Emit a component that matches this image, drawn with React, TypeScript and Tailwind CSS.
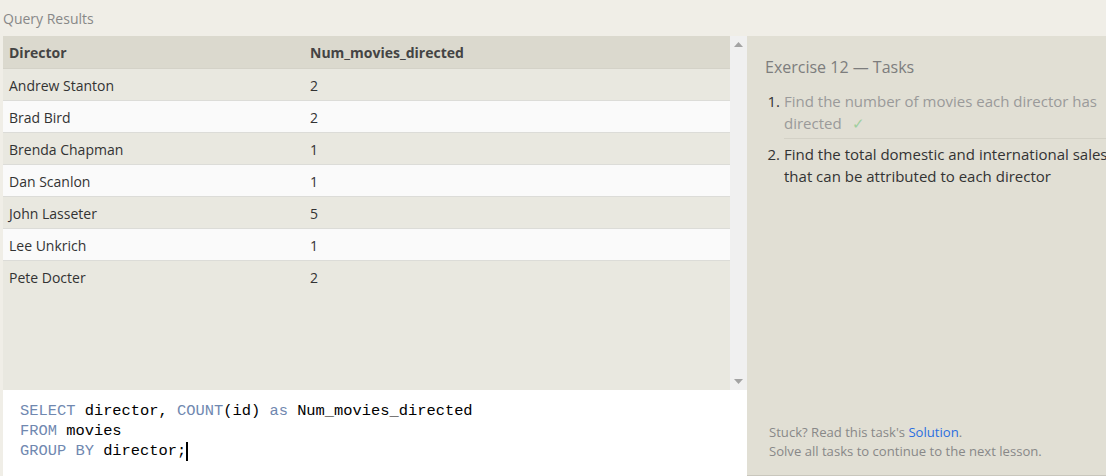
import React from 'react';

const rows: [string, number][] = [
  ['Andrew Stanton', 2],
  ['Brad Bird', 2],
  ['Brenda Chapman', 1],
  ['Dan Scanlon', 1],
  ['John Lasseter', 5],
  ['Lee Unkrich', 1],
  ['Pete Docter', 2],
];

const App: React.FC = () => {
  return (
    <div className="w-[1106px] h-[476px] overflow-hidden flex flex-col bg-[#f0eee7] font-['Open_Sans',sans-serif] text-[#333]">
      {/* header */}
      <div className="h-9 shrink-0 pl-[3px] flex items-center text-[14px] text-[#888]">Query Results</div>

      <div className="flex flex-1 min-h-0">
        {/* left: results + editor */}
        <div className="ml-[3px] w-[744px] flex flex-col">
          <div className="flex h-[354px]">
            <div className="flex-1 bg-[#e9e8e0] text-[14px]">
              <div className="flex h-[33px] items-center bg-[#dbd9ce] font-bold text-[#444] border-b border-[#d4d2c8]">
                <div className="w-[307px] pl-[6px]">Director</div>
                <div>Num_movies_directed</div>
              </div>
              {rows.map(([name, n], i) => (
                <div
                  key={name}
                  className={`flex h-8 items-center pt-[1px] border-b border-[#dcdcd8] ${i % 2 === 1 ? 'bg-[#fafafa]' : 'bg-[#e9e8e0]'} ${i === rows.length - 1 ? 'border-b-0' : ''}`}
                >
                  <div className="w-[307px] pl-[6px]">{name}</div>
                  <div>{n}</div>
                </div>
              ))}
            </div>
            {/* scrollbar */}
            <div className="w-[17px] bg-[#f0f0f0] flex flex-col items-center justify-between py-[6px]">
              <svg width="9" height="5" viewBox="0 0 9 5"><path d="M0 5 L4.5 0 L9 5 Z" fill="#a3a3a3" /></svg>
              <svg width="9" height="5" viewBox="0 0 9 5"><path d="M0 0 L9 0 L4.5 5 Z" fill="#a3a3a3" /></svg>
            </div>
          </div>
          {/* editor */}
          <div className="flex-1 bg-white pl-[17px] pt-[11px] font-['Liberation_Mono',monospace] text-[15.4px] leading-5 text-black whitespace-pre">
            <div><span className="text-[#7088b0]">SELECT</span> director, <span className="text-[#7088b0]">COUNT</span>(id) <span className="text-[#7088b0]">as</span> Num_movies_directed</div>
            <div><span className="text-[#7088b0]">FROM</span> movies</div>
            <div className="flex items-center"><span className="text-[#7088b0]">GROUP BY</span> director;<span className="inline-block w-[2px] h-[19px] bg-black" /></div>
          </div>
        </div>

        {/* right: tasks */}
        <div className="flex-1 overflow-hidden bg-[#e1dfd4] border-b border-[#c9c7bd] flex flex-col">
          <div className="pl-[18px] pt-[20px] w-[420px]">
            <div className="text-[16px] text-[#7d7d7d] leading-[22px]">Exercise 12 — Tasks</div>
            <ol className="mt-[12px] text-[15px] leading-[22px]">
              <li className="flex">
                <span className="w-[19px] text-right pr-[4px] text-[#333]">1.</span>
                <div className="w-[340px] text-[#9a9a9a] pb-[4px] border-b border-[#d3d1c6] pr-[20px]">
                  Find the number of movies each director has directed<span className="ml-[10px] text-[#9fcf9f]">✓</span>
                </div>
              </li>
              <li className="flex mt-[4px]">
                <span className="w-[19px] text-right pr-[4px] text-[#333]">2.</span>
                <div className="w-[340px] text-[#333]">Find the total domestic and international sales that can be attributed to each director</div>
              </li>
            </ol>
          </div>
          <div className="mt-auto pl-[22px] pb-[14px] text-[13.1px] leading-[19px] text-[#888]">
            <div>Stuck? Read this task's <span className="text-[#2a6ee0]">Solution</span>.</div>
            <div>Solve all tasks to continue to the next lesson.</div>
          </div>
        </div>
      </div>
    </div>
  );
};

export default App;
